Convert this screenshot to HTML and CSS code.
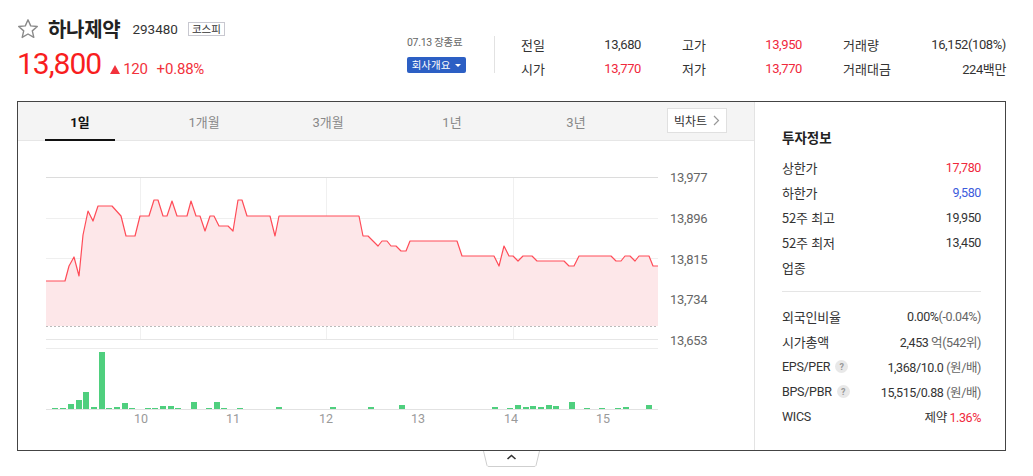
FILE: index.html
```html
<!DOCTYPE html>
<html lang="ko">
<head>
<meta charset="utf-8">
<link rel="stylesheet" href="styles.css">
</head>
<body>
<div class="header">
  <div class="left">
    <div class="title-row">
      <svg class="star" width="22" height="22" viewBox="0 0 22 22"><path d="M11 1.8 L13.7 7.9 L20.3 8.5 L15.3 12.9 L16.8 19.4 L11 16 L5.2 19.4 L6.7 12.9 L1.7 8.5 L8.3 7.9 Z" fill="none" stroke="#8a8a8a" stroke-width="1.4" stroke-linejoin="round"/></svg>
      <h1 class="name">하나제약</h1>
      <span class="code">293480</span>
      <span class="market">코스피</span>
    </div>
    <div class="price-row">
      <span class="price">13,800</span>
      <span class="change"><span class="tri"></span>120</span>
      <span class="rate">+0.88%</span>
    </div>
  </div>
  <div class="status">
    <div class="date">07.13 장종료</div>
    <button class="company">회사개요 <span class="caret"></span></button>
  </div>
  <div class="divider"></div>
  <div class="summary">
    <div class="item"><span class="lab">전일</span><span class="val">13,680</span></div>
    <div class="item"><span class="lab">고가</span><span class="val up">13,950</span></div>
    <div class="item"><span class="lab">거래량</span><span class="val">16,152(108%)</span></div>
    <div class="item"><span class="lab">시가</span><span class="val up">13,770</span></div>
    <div class="item"><span class="lab">저가</span><span class="val up">13,770</span></div>
    <div class="item"><span class="lab">거래대금</span><span class="val">224백만</span></div>
  </div>
</div>

<div class="box">
  <div class="chart-pane">
    <div class="tabs">
      <span class="tab active">1일</span>
      <span class="tab">1개월</span>
      <span class="tab">3개월</span>
      <span class="tab">1년</span>
      <span class="tab">3년</span>
      <span class="big">빅차트 <svg width="7" height="11" viewBox="0 0 7 11"><path d="M1 1 L5.5 5.5 L1 10" fill="none" stroke="#999" stroke-width="1.2"/></svg></span>
    </div>
    <svg class="chart" width="736" height="308" viewBox="18 141 736 308">
      <g stroke="#f0f0f0" stroke-width="1">
        <line x1="140.5" y1="177" x2="140.5" y2="340"/>
        <line x1="326.5" y1="177" x2="326.5" y2="340"/>
        <line x1="513.5" y1="177" x2="513.5" y2="340"/>
      </g>
      <line x1="46" y1="177.5" x2="658" y2="177.5" stroke="#dcdcdc"/>
      <line x1="46" y1="218.5" x2="658" y2="218.5" stroke="#efefef"/>
      <line x1="46" y1="258.5" x2="658" y2="258.5" stroke="#efefef"/>
      <line x1="46" y1="299.5" x2="658" y2="299.5" stroke="#efefef"/>
      <polygon fill="#fde7e9" points="46,281 65,281 69,266 74,257 79,276 83,235 88,211 93,221 98,206 112,206 121,216 126,236 135,236 140,216 149,216 154,200 158,200 163,216 167,216 172,201 177,216 187,216 191,201 196,216 200,216 205,231 210,216 214,216 219,226 228,226 233,231 238,200 242,200 247,216 270,216 275,236 279,216 359,216 363,236 368,236 378,246 382,241 387,241 391,246 396,246 401,251 406,251 410,241 457,241 462,256 494,256 499,266 504,246 509,256 513,256 518,261 523,256 532,256 537,261 564,261 569,266 574,266 579,256 611,256 616,261 621,261 625,256 630,256 635,261 639,256 649,256 653,266 658,266 658,326 46,326"/>
      <polyline fill="none" stroke="#ff4c58" stroke-width="1.2" stroke-linejoin="round" points="46,281 65,281 69,266 74,257 79,276 83,235 88,211 93,221 98,206 112,206 121,216 126,236 135,236 140,216 149,216 154,200 158,200 163,216 167,216 172,201 177,216 187,216 191,201 196,216 200,216 205,231 210,216 214,216 219,226 228,226 233,231 238,200 242,200 247,216 270,216 275,236 279,216 359,216 363,236 368,236 378,246 382,241 387,241 391,246 396,246 401,251 406,251 410,241 457,241 462,256 494,256 499,266 504,246 509,256 513,256 518,261 523,256 532,256 537,261 564,261 569,266 574,266 579,256 611,256 616,261 621,261 625,256 630,256 635,261 639,256 649,256 653,266 658,266"/>
      <line x1="46" y1="326.5" x2="658" y2="326.5" stroke="#bbbbbb" stroke-dasharray="2,2"/>
      <line x1="46" y1="339.5" x2="658" y2="339.5" stroke="#e6e6e6"/>
      <line x1="46" y1="348.5" x2="658" y2="348.5" stroke="#ececec"/>
      <g class="ylab">
        <text x="670" y="182">13,977</text>
        <text x="670" y="223">13,896</text>
        <text x="670" y="264">13,815</text>
        <text x="670" y="304">13,734</text>
        <text x="670" y="345">13,653</text>
      </g>
      <g fill="#4fcf7e">
        <rect x="52" y="408" width="6" height="1"/><rect x="60" y="408" width="6" height="1"/>
        <rect x="68" y="404" width="6" height="5"/><rect x="76" y="400" width="6" height="9"/>
        <rect x="83" y="392" width="6" height="17"/><rect x="91" y="407" width="6" height="2"/>
        <rect x="99" y="352" width="6" height="57"/><rect x="106" y="408" width="6" height="1"/>
        <rect x="114" y="407" width="6" height="2"/><rect x="122" y="403" width="6" height="6"/>
        <rect x="129" y="408" width="6" height="1"/><rect x="145" y="408" width="6" height="1"/>
        <rect x="152" y="408" width="6" height="1"/><rect x="160" y="406" width="6" height="3"/>
        <rect x="168" y="406" width="6" height="3"/><rect x="175" y="408" width="6" height="1"/>
        <rect x="191" y="402" width="6" height="7"/><rect x="206" y="408" width="6" height="1"/>
        <rect x="214" y="402" width="6" height="7"/><rect x="221" y="408" width="6" height="1"/>
        <rect x="237" y="408" width="6" height="1"/><rect x="276" y="407" width="6" height="2"/>
        <rect x="330" y="407" width="6" height="2"/><rect x="368" y="407" width="6" height="2"/>
        <rect x="399" y="405" width="6" height="4"/><rect x="492" y="407" width="6" height="2"/>
        <rect x="507" y="408" width="6" height="1"/><rect x="515" y="405" width="6" height="4"/>
        <rect x="523" y="407" width="6" height="2"/><rect x="530" y="406" width="6" height="3"/>
        <rect x="538" y="407" width="6" height="2"/><rect x="546" y="405" width="6" height="4"/>
        <rect x="553" y="406" width="6" height="3"/><rect x="569" y="402" width="6" height="7"/>
        <rect x="584" y="408" width="6" height="1"/><rect x="599" y="408" width="6" height="1"/>
        <rect x="615" y="408" width="6" height="1"/><rect x="623" y="407" width="6" height="2"/>
        <rect x="646" y="405" width="6" height="4"/>
      </g>
      <line x1="46" y1="409.5" x2="658" y2="409.5" stroke="#e2e2e2"/>
      <g class="xlab">
        <text x="141" y="423">10</text>
        <text x="233" y="423">11</text>
        <text x="326" y="423">12</text>
        <text x="418" y="423">13</text>
        <text x="511" y="423">14</text>
        <text x="603" y="423">15</text>
      </g>
    </svg>
  </div>
  <div class="info-pane">
    <h2 class="info-title">투자정보</h2>
    <div class="rows">
      <div class="row"><span>상한가</span><span class="num up">17,780</span></div>
      <div class="row"><span>하한가</span><span class="num down">9,580</span></div>
      <div class="row"><span>52주 최고</span><span class="num">19,950</span></div>
      <div class="row"><span>52주 최저</span><span class="num">13,450</span></div>
      <div class="row"><span>업종</span><span class="num"></span></div>
    </div>
    <div class="sep"></div>
    <div class="rows">
      <div class="row"><span>외국인비율</span><span class="num">0.00%<span class="sub">(-0.04%)</span></span></div>
      <div class="row"><span>시가총액</span><span class="num">2,453 <span class="sub">억(542위)</span></span></div>
      <div class="row"><span class="en">EPS/PER <span class="q">?</span></span><span class="num">1,368/10.0 <span class="sub">(원/배)</span></span></div>
      <div class="row"><span class="en">BPS/PBR <span class="q">?</span></span><span class="num">15,515/0.88 <span class="sub">(원/배)</span></span></div>
      <div class="row"><span class="en">WICS</span><span class="num"><span class="kr">제약</span> <span class="up">1.36%</span></span></div>
    </div>
  </div>
</div>
<div class="toggle">
  <svg width="57" height="16" viewBox="0 0 57 16"><path d="M0.5 0 L4 14.5 Q4.5 15.5 6 15.5 L51 15.5 Q52.5 15.5 53 14.5 L56.5 0" fill="#fff" stroke="#cfcfcf"/><path d="M24.5 8 L28.5 4.5 L32.5 8" fill="none" stroke="#333" stroke-width="1.6"/></svg>
</div>
</body>
</html>
```

FILE: styles.css
```css
* { box-sizing: border-box; }
body {
  margin: 0;
  background: #fff;
  font-family: Roboto, "Noto Sans CJK KR", sans-serif;
  color: #333;
  width: 1033px;
  height: 476px;
  overflow: hidden;
}
.header {
  display: flex;
  align-items: flex-start;
  height: 101px;
  padding-left: 17px;
}
.left { width: 390px; padding-top: 16px; }
.title-row { display: flex; align-items: center; height: 26px; }
.star { display: block; margin-right: 9px; }
.name {
  margin: 0;
  font-family: "Noto Sans CJK KR", sans-serif;
  font-size: 20px;
  font-weight: 700;
  letter-spacing: -0.3px;
  line-height: 26px;
  color: #222;
}
.code { font-size: 13.5px; color: #333; margin-left: 12px; line-height: 26px; }
.market {
  margin-left: 10px;
  font-family: "Noto Sans CJK KR", sans-serif;
  font-size: 10.5px;
  line-height: 12px;
  padding: 0 3px;
  border: 1px solid #c8c8d0;
  color: #333;
}
.price-row { display: flex; align-items: baseline; margin-top: 5px; height: 34px; }
.price { font-size: 30px; letter-spacing: -1px; color: #f81e1e; line-height: 34px; }
.change { font-size: 15px; color: #f2323c; margin-left: 9px; display: flex; align-items: baseline; letter-spacing: -0.3px; }
.tri {
  display: inline-block;
  width: 0; height: 0;
  border-left: 5px solid transparent;
  border-right: 5px solid transparent;
  border-bottom: 9px solid #f2323c;
  margin-right: 3px;
}
.rate { font-size: 15px; color: #f2323c; margin-left: 9px; letter-spacing: -0.2px; }

.status { width: 59px; padding-top: 37px; }
.date {
  font-family: Roboto, "Noto Sans CJK KR", sans-serif;
  font-size: 10.5px; color: #666; line-height: 12px; white-space: nowrap; letter-spacing: -0.3px;
}
.company {
  margin-top: 8px;
  display: flex; align-items: center; justify-content: center;
  width: 59px; height: 16px;
  border: 0; border-radius: 2px;
  background: #2c5fc4;
  color: #fff;
  font-family: "Noto Sans CJK KR", sans-serif;
  font-size: 10.5px;
  padding: 0;
  line-height: 16px;
}
.caret {
  display: inline-block; width: 0; height: 0; margin-left: 5px;
  border-left: 3px solid transparent; border-right: 3px solid transparent; border-top: 3px solid #fff;
}
.divider { width: 1px; height: 37px; background: #e2e2e2; margin-top: 36px; margin-left: 28px; }
.summary {
  margin-left: 26px;
  margin-top: 32px;
  display: grid;
  grid-template-columns: 120px 120px 163px;
  column-gap: 41px;
  grid-auto-rows: 24px;
}
.item { display: flex; justify-content: space-between; align-items: center; font-size: 13px; }
.lab { font-family: "Noto Sans CJK KR", sans-serif; color: #333; }
.val { letter-spacing: -0.4px; color: #333; }
.up { color: #f0283c; }
.down { color: #3c5bdc; }

.box {
  margin-left: 17px;
  width: 989px;
  height: 350px;
  border: 1px solid #444;
  display: flex;
}
.chart-pane { width: 736px; display: flex; flex-direction: column; }
.tabs {
  height: 39px;
  background: #f4f4f4;
  border-bottom: 1px solid #e6e6e6;
  display: flex;
  align-items: stretch;
  position: relative;
}
.tab {
  width: 124px;
  display: flex; align-items: center; justify-content: center;
  font-family: Roboto, "Noto Sans CJK KR", sans-serif;
  font-size: 13px; color: #888;
  position: relative;
}
.tab.active { color: #111; font-weight: 700; }
.tab.active::after {
  content: "";
  position: absolute;
  left: 27px; right: 27px; bottom: -1px;
  height: 2px; background: #111;
}
.big {
  margin-left: 29px;
  margin-top: 6px;
  height: 25px;
  width: 60px;
  background: #fff;
  border: 1px solid #e0e0e0;
  display: flex; align-items: center; justify-content: center; gap: 6px;
  font-family: "Noto Sans CJK KR", sans-serif;
  font-size: 12px; color: #333;
}
.chart { display: block; }
.ylab text { font-family: Roboto, sans-serif; font-size: 13px; fill: #666; letter-spacing: -0.3px; }
.xlab text { font-family: Roboto, sans-serif; font-size: 12.5px; fill: #9a9a9a; text-anchor: middle; }

.info-pane {
  width: 251px;
  border-left: 1px solid #e3e3e3;
  padding: 25px 24px 0 27px;
}
.info-title {
  margin: 0;
  font-family: "Noto Sans CJK KR", sans-serif;
  font-size: 13.5px; font-weight: 700; color: #222;
  line-height: 20px;
}
.rows { margin-top: 7.5px; }
.row {
  height: 25px;
  display: flex; justify-content: space-between; align-items: center;
  font-family: "Noto Sans CJK KR", sans-serif;
  font-size: 13px; color: #333;
  letter-spacing: -0.2px;
}
.num { font-family: Roboto, "Noto Sans CJK KR", sans-serif; font-size: 12.5px; letter-spacing: -0.4px; white-space: nowrap; }
.sub { color: #666; font-family: Roboto, "Noto Sans CJK KR", sans-serif; }
.kr { font-family: "Noto Sans CJK KR", sans-serif; }
.en { font-family: Roboto, sans-serif; font-size: 12.5px; display: flex; align-items: center; letter-spacing: -0.3px; }
.q {
  display: inline-flex; align-items: center; justify-content: center;
  width: 13px; height: 13px; border-radius: 50%;
  background: #e8e8e8; color: #999; font-size: 9px; font-weight: 700;
  margin-left: 5px;
}
.sep { height: 1px; background: #e5e5e5; margin-top: 11px; }
.sep + .rows { margin-top: 12.5px; }
.toggle { margin-left: 483px; height: 16px; }
.toggle svg { display: block; }
```
